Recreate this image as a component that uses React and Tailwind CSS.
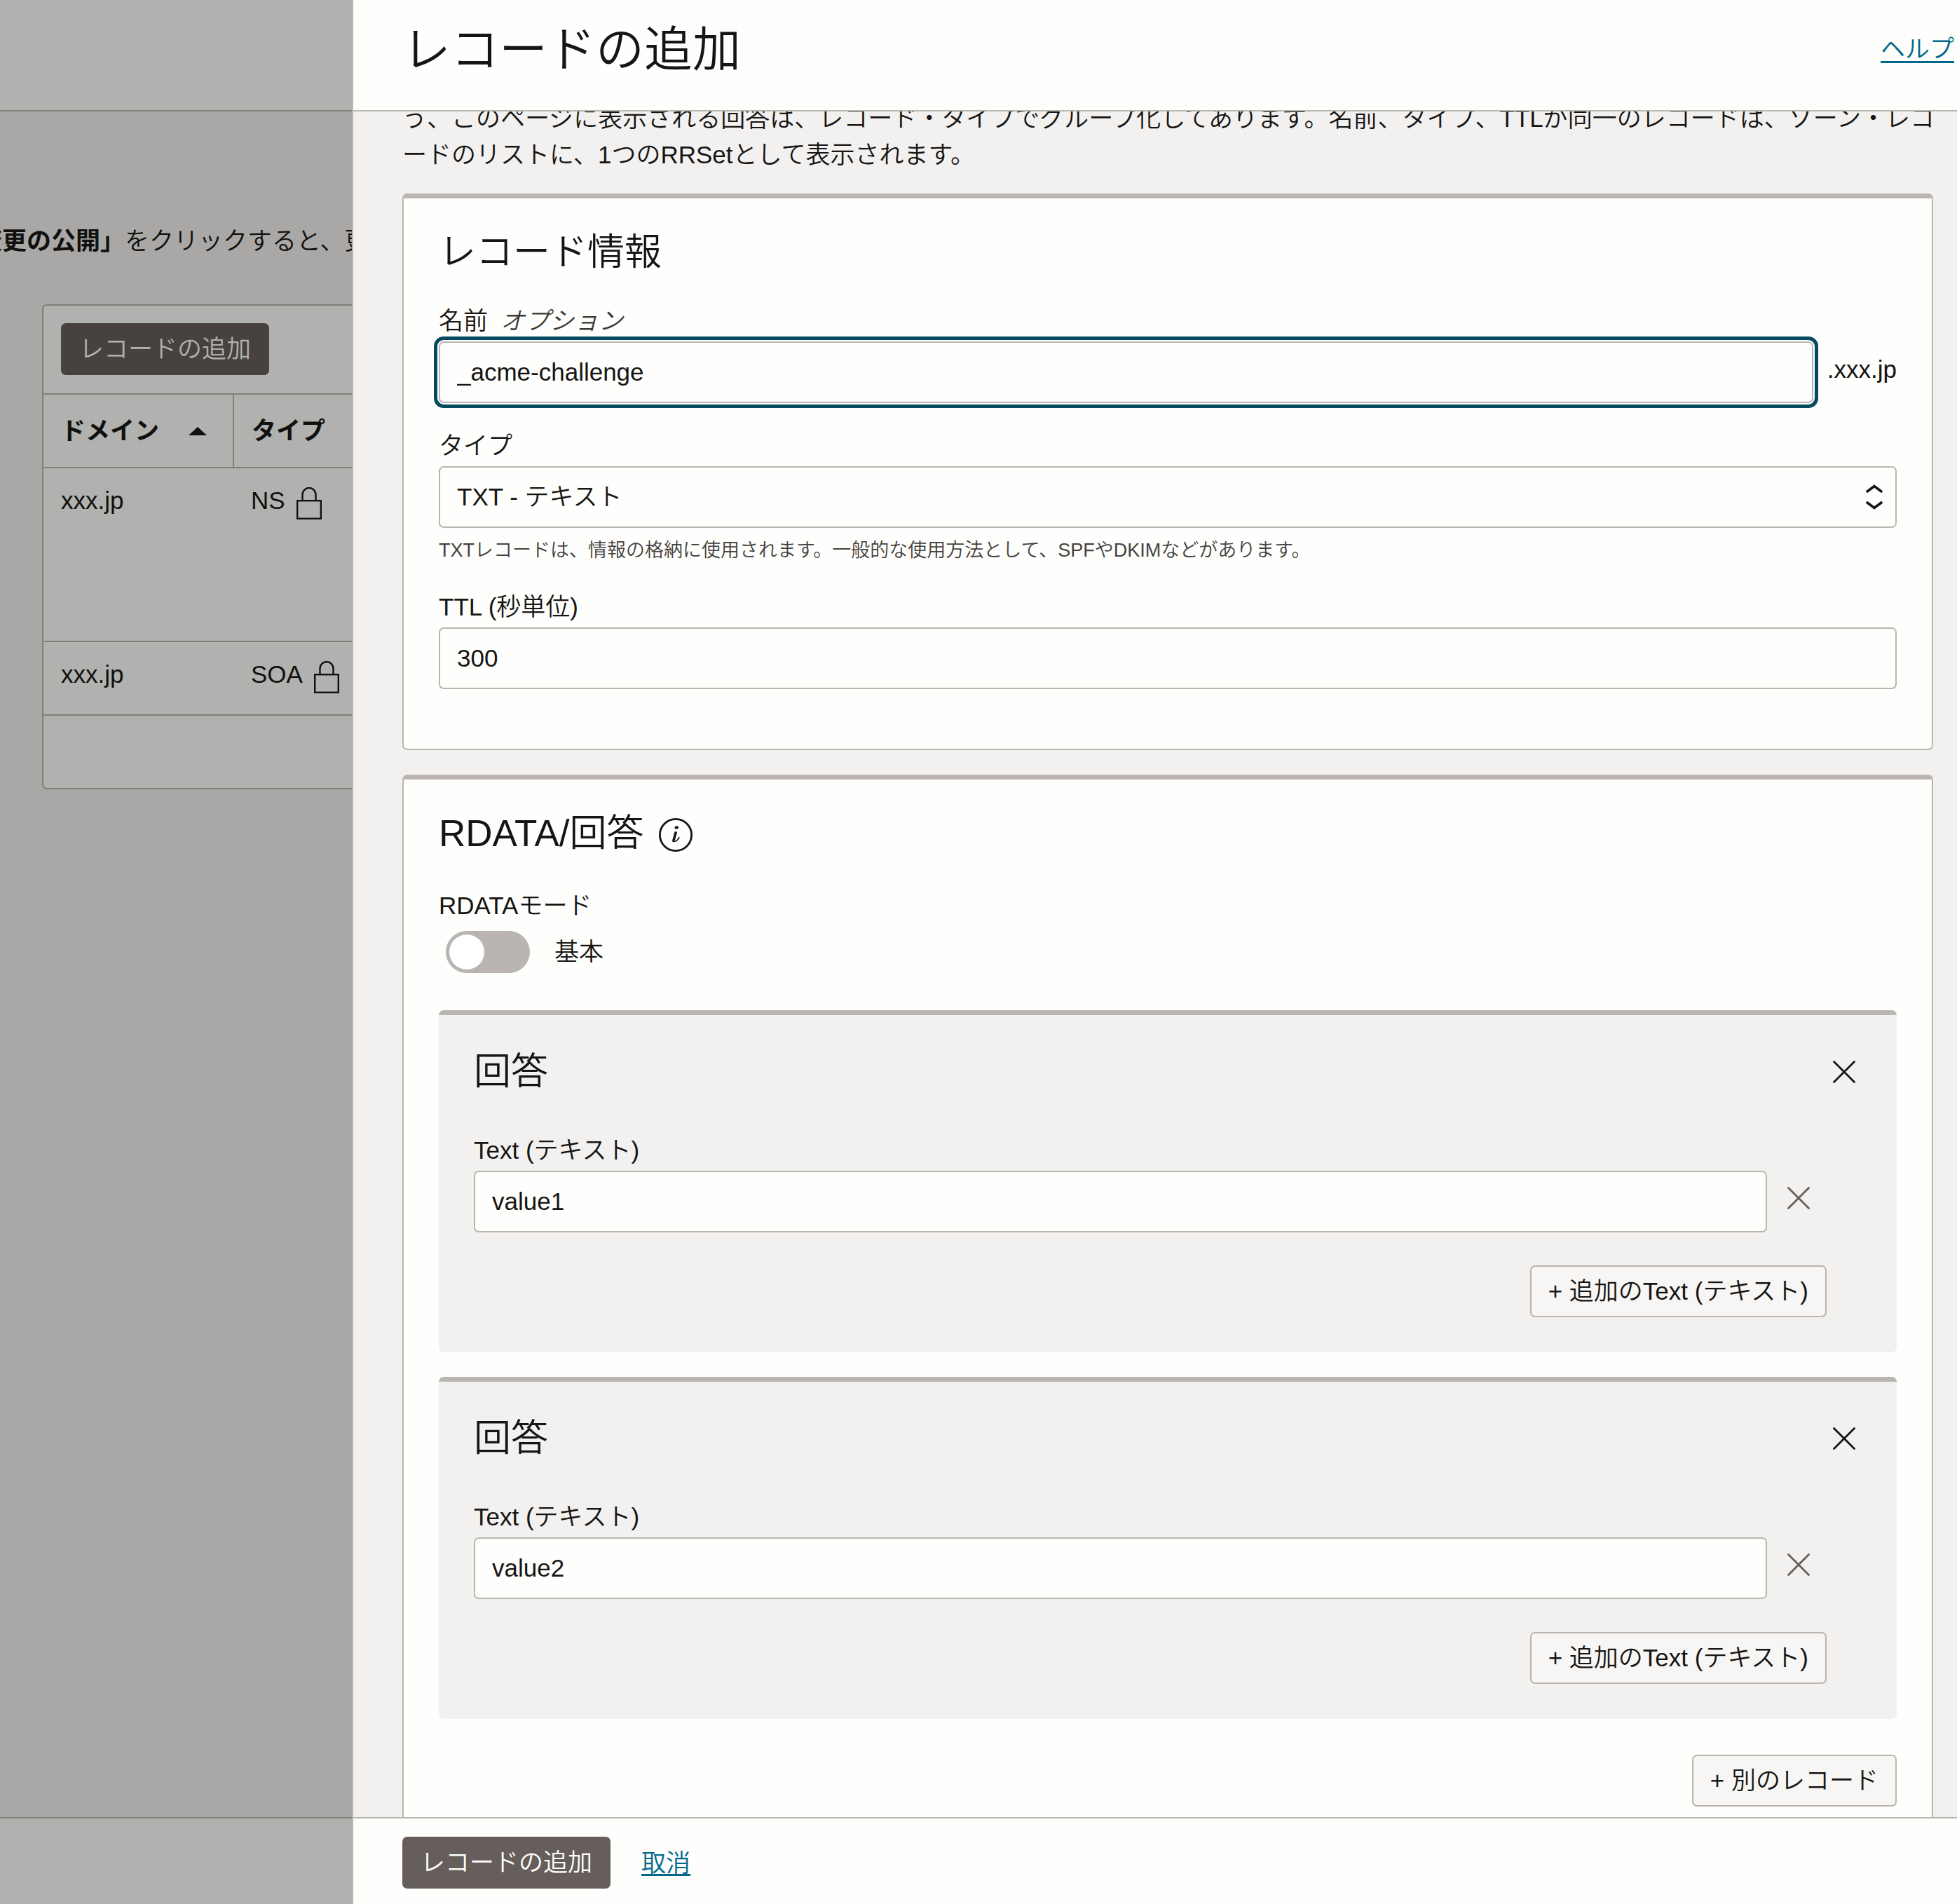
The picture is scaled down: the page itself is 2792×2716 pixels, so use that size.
import React, { useState } from "react";

const LINE = "border-[#bab5b0]";

function LockIcon() {
  return (
    <svg className="mt-[7px] h-[46px] w-9 shrink-0" viewBox="0 0 36 46" fill="none" stroke="currentColor" strokeWidth="2.4" aria-label="ロック" role="img">
      <rect x="1.2" y="19.2" width="33.6" height="25.6" />
      <path d="M8.5 19V10.5a9.5 9.5 0 0 1 19 0V19" />
    </svg>
  );
}

function CrossIcon() {
  return (
    <svg className="block size-8" viewBox="0 0 32 32" fill="none" stroke="currentColor" strokeWidth="2.8" strokeLinecap="round" aria-hidden="true">
      <path d="M1.5 1.5l29 29M30.5 1.5l-29 29" />
    </svg>
  );
}

function InfoIcon() {
  return (
    <svg className="block size-12" viewBox="0 0 48 48" fill="none" stroke="currentColor" strokeLinecap="round" aria-hidden="true">
      <circle cx="24" cy="24" r="22.6" strokeWidth="2.8" />
      <ellipse cx="25.3" cy="13.4" rx="2.8" ry="2.1" transform="rotate(-12 25.3 13.4)" fill="currentColor" stroke="none" />
      <path d="M24.4 19.4l-3.200 12" strokeWidth="3.6" strokeLinecap="butt" />
      <path d="M21.200 31c-.8 3 1 2.800 3.200 1.800 2-1 3.600-2.800 4.400-5" strokeWidth="1.800" />
      <path d="M21 31l-.4 1.700" strokeWidth="3" />
    </svg>
  );
}

function PrimaryButton({ dimmed }) {
  return (
    <button
      type="button"
      className={
        dimmed
          ? "h-[74px] rounded-[7px] bg-[#47423f] px-[26px] text-[#b1b1af]"
          : "h-[74px] rounded-[7px] bg-[#665e5b] px-[26px] text-[#fefefc]"
      }
    >
      レコードの追加
    </button>
  );
}

function SecondaryButton({ children }) {
  return (
    <button type="button" className={`h-[74px] rounded-[7px] border-2 ${LINE} bg-[#f7f6f4] px-6`}>
      {children}
    </button>
  );
}

const FIELD = `h-[88px] rounded-[7px] border-2 ${LINE} bg-[#fefefc] px-6`;

function Answer({ id, value }) {
  const [text, setText] = useState(value);
  return (
    <section className={`rounded-[7px] border-t-[7px] ${LINE} bg-[#f3f1f0] pt-[54px] pr-[59px] pb-[50px] pl-[50px]`}>
      <header className="flex items-center justify-between">
        <h3 className="text-[53px] leading-[54px]">回答</h3>
        <button type="button" aria-label="回答の削除">
          <CrossIcon />
        </button>
      </header>
      <label htmlFor={id} className="mt-[59px] block leading-[52px]">
        Text (テキスト)
      </label>
      <div className="mt-[3px] flex items-center gap-[29px] pr-[65px]">
        <input id={id} className={`${FIELD} min-w-0 flex-1`} value={text} onChange={(e) => setText(e.target.value)} />
        <button type="button" aria-label="テキストの削除" className="-mt-[10px] text-[#665e5b]">
          <CrossIcon />
        </button>
      </div>
      <div className="mt-[47px] flex justify-end pr-[41px]">
        <SecondaryButton>+ 追加のText (テキスト)</SecondaryButton>
      </div>
    </section>
  );
}

function ZonePage() {
  return (
    <div className="flex w-[502px] shrink-0 flex-col overflow-hidden bg-[#a9a8a6] whitespace-nowrap text-[#11100e]">
      <div className="h-[159px] shrink-0 border-b-2 border-[#827f7b] bg-[#b1b1af]" />
      <main className="min-h-0 flex-1">
        <p className="-ml-8 pt-[159px] leading-[52px]">
          <b className="font-bold">変更の公開」</b>をクリックすると、更
        </p>
        <div className="mt-16 ml-[60px] w-[900px] rounded-[7px] border-2 border-[#827f7b] bg-[#b1b1af]">
          <div className="border-b-2 border-[#827f7b] px-[25px] pt-[25px] pb-[26px]">
            <PrimaryButton dimmed />
          </div>
          <table className="w-full table-fixed border-separate border-spacing-0 text-left">
            <thead>
              <tr className="h-[105px]">
                <th className="w-[272px] border-r-2 border-b-2 border-[#827f7b] pl-[25px] font-bold">
                  <span className="flex items-center gap-[42px]">
                    ドメイン
                    <svg className="h-3 w-[26px]" viewBox="0 0 26 12" aria-hidden="true">
                      <path d="M0 12L13 0l13 12z" fill="currentColor" />
                    </svg>
                  </span>
                </th>
                <th className="border-b-2 border-[#827f7b] pl-[25px] font-bold">タイプ</th>
              </tr>
            </thead>
            <tbody>
              <tr className="h-[248px] align-top">
                <td className="border-b-2 border-[#827f7b] pt-5 pl-[25px] leading-[52px]">xxx.jp</td>
                <td className="border-b-2 border-[#827f7b] pt-5 pl-6 leading-[52px]">
                  <span className="flex items-start gap-4">
                    NS <LockIcon />
                  </span>
                </td>
              </tr>
              <tr className="h-[105px] align-top">
                <td className="border-b-2 border-[#827f7b] pt-5 pl-[25px] leading-[52px]">xxx.jp</td>
                <td className="border-b-2 border-[#827f7b] pt-5 pl-6 leading-[52px]">
                  <span className="flex items-start gap-4">
                    SOA <LockIcon />
                  </span>
                </td>
              </tr>
            </tbody>
          </table>
          <div className="h-[103px]" />
        </div>
      </main>
      <div className="h-[124px] shrink-0 border-t-2 border-[#827f7b] bg-[#b1b1af]" />
    </div>
  );
}

export default function App() {
  const [name, setName] = useState("_acme-challenge");
  const [ttl, setTtl] = useState("300");
  const [advanced, setAdvanced] = useState(false);

  return (
    <div
      lang="ja"
      className="flex h-screen overflow-hidden text-[35px] leading-[52px] font-[350] text-[#161513] [font-family:'Liberation_Sans','Noto_Sans_CJK_JP',sans-serif]"
    >
      <ZonePage />
      <div role="dialog" aria-labelledby="panel-title" className={`flex min-w-0 flex-1 flex-col border-l-2 ${LINE} bg-[#f3f1f0]`}>
        <header className={`flex h-[159px] shrink-0 items-start justify-between border-b-2 ${LINE} bg-[#fefefc] pt-8 pr-1 pl-[70px]`}>
          <h1 id="panel-title" className="text-[69px] leading-[80px]">
            レコードの追加
          </h1>
          <a href="#help" className="mt-3 text-[#00688c] underline decoration-3 underline-offset-[5px]">
            ヘルプ
          </a>
        </header>

        <div className="min-h-0 flex-1 overflow-hidden pr-[34px] pl-[70px]">
          <p className="-mt-4 whitespace-nowrap">
            う、このページに表示される回答は、レコード・タイプでグループ化してあります。名前、タイプ、TTLが同一のレコードは、ゾーン・レコ
            <br />
            ードのリストに、1つのRRSetとして表示されます。
          </p>

          <section className={`mt-[29px] rounded-[7px] border-2 border-t-[7px] ${LINE} bg-[#fefefc] px-[50px] pt-[51px] pb-[85px]`}>
            <h2 className="text-[53px] leading-[52px]">レコード情報</h2>
            <label htmlFor="name" className="mt-[46px] block leading-[52px]">
              名前<i className="ml-[18px] text-[#3b3936]">オプション</i>
            </label>
            <div className="mt-[3px] flex items-center gap-5">
              <input
                id="name"
                className={`${FIELD} min-w-0 flex-1 outline-5 outline-offset-2 outline-[#04495f]`}
                value={name}
                onChange={(e) => setName(e.target.value)}
              />
              <span className="-mt-2">.xxx.jp</span>
            </div>
            <label htmlFor="type" className="mt-[35px] block leading-[52px]">
              タイプ
            </label>
            <div className="relative mt-[3px]">
              <select id="type" className={`${FIELD} w-full appearance-none`} defaultValue="txt">
                <option value="txt">TXT - テキスト</option>
              </select>
              <svg
                className="pointer-events-none absolute top-[26px] right-5 h-9 w-6"
                viewBox="0 0 24 36"
                fill="none"
                stroke="currentColor"
                strokeWidth="3.6"
                strokeLinecap="round"
                aria-hidden="true"
              >
                <path d="M2 10l10-7.500 10 7.500M2 26l10 7.500 10-7.500" />
              </svg>
            </div>
            <p className="mt-3 text-[27px] leading-10 text-[#444240]">
              TXTレコードは、情報の格納に使用されます。一般的な使用方法として、SPFやDKIMなどがあります。
            </p>
            <label htmlFor="ttl" className="mt-[35px] block leading-[52px]">
              TTL (秒単位)
            </label>
            <input id="ttl" className={`${FIELD} mt-[3px] w-full`} value={ttl} onChange={(e) => setTtl(e.target.value)} />
          </section>

          <section className={`mt-[35px] rounded-[7px] border-2 border-t-[7px] ${LINE} bg-[#fefefc] px-[50px] pt-[51px] pb-[50px]`}>
            <div className="flex items-center gap-[22px]">
              <h2 className="text-[53px] leading-[52px]">RDATA/回答</h2>
              <button type="button" aria-label="情報" className="mt-1">
                <InfoIcon />
              </button>
            </div>
            <label htmlFor="mode" className="mt-[51px] block leading-[52px]">
              RDATAモード
            </label>
            <div className="mt-[10px] flex items-center gap-[35px] pl-[10px]">
              <input
                id="mode"
                type="checkbox"
                role="switch"
                checked={advanced}
                onChange={(e) => setAdvanced(e.target.checked)}
                className="flex h-[60px] w-[120px] appearance-none items-center rounded-full bg-[#bab5b0] px-[5px] before:size-[50px] before:rounded-full before:bg-white checked:justify-end"
              />
              <span>基本</span>
            </div>
            <div className="mt-[53px] flex flex-col gap-[35px]">
              <Answer id="answer-1" value="value1" />
              <Answer id="answer-2" value="value2" />
            </div>
            <div className="mt-[51px] flex justify-end">
              <SecondaryButton>+ 別のレコード</SecondaryButton>
            </div>
          </section>
        </div>

        <footer className={`flex h-[124px] shrink-0 items-start gap-11 border-t-2 ${LINE} bg-[#fefefc] pt-[26px] pl-[70px]`}>
          <PrimaryButton />
          <a href="#cancel" className="mt-3 text-[#00688c] underline decoration-3 underline-offset-[3px]">
            取消
          </a>
        </footer>
      </div>
    </div>
  );
}
